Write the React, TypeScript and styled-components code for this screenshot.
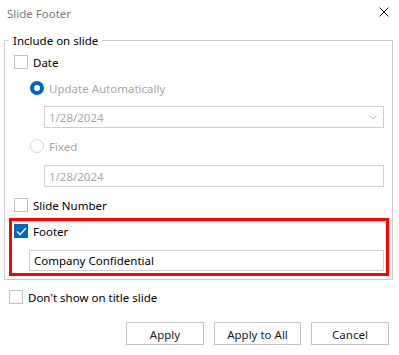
import React from "react";
import styled, { createGlobalStyle } from "styled-components";

const Global = createGlobalStyle`
  html, body { margin: 0; padding: 0; background: #fff; }
  body { font-family: "Segoe UI", "Noto Sans", "Open Sans", sans-serif; font-size: 11.5px; color: #000; }
  * { box-sizing: border-box; }
`;

const Dialog = styled.div`
  width: 399px;
  height: 355px;
  background: #fff;
  display: flex;
  flex-direction: column;
  overflow: hidden;
`;

const TitleBar = styled.div`
  height: 32px;
  flex: none;
  display: flex;
  align-items: flex-start;
  justify-content: space-between;
  padding: 5px 10px 0 7px;
`;

const Title = styled.span`
  color: #7a7a7a;
  font-size: 11.5px;
  line-height: 17px;
`;

const CloseBtn = styled.span`
  display: flex;
  width: 10px;
  height: 10px;
  margin-top: 2px;
`;

const Group = styled.fieldset`
  margin: 0 0 0 4px;
  width: 389px;
  flex: none;
  border: 1px solid #cccccc;
  padding: 0 3px 3px 4px;
  display: flex;
  flex-direction: column;
  min-width: 0;
`;

const Legend = styled.legend`
  padding: 0 4px;
  height: 16px;
  line-height: 17px;
  font-size: 11.5px;
  color: #000;
`;

const Row = styled.div<{ $h: number; $indent: number; $mt?: number }>`
  display: flex;
  flex: none;
  align-items: center;
  gap: 5px;
  height: ${(p) => p.$h}px;
  padding-left: ${(p) => p.$indent}px;
  margin-top: ${(p) => p.$mt ?? 0}px;
`;

const Label = styled.span<{ $disabled?: boolean }>`
  color: ${(p) => (p.$disabled ? "#a8a8a8" : "#000")};
  line-height: 16px;
  padding-top: 1px;
  white-space: nowrap;
`;

const Box = styled.span<{ $checked?: boolean }>`
  width: 14px;
  height: 14px;
  flex: none;
  border: 1px solid ${(p) => (p.$checked ? "#0067c0" : "#c2c2c2")};
  background: ${(p) => (p.$checked ? "#0067c0" : "#fff")};
  display: flex;
  align-items: center;
  justify-content: center;
`;

const Radio = styled.span<{ $checked?: boolean }>`
  width: 14px;
  height: 14px;
  flex: none;
  border-radius: 50%;
  ${(p) =>
    p.$checked
      ? "background: #fff; border: 4px solid #0067c0;"
      : "background: #fff; border: 1px solid #d6d6d6;"}
`;

const Field = styled.div<{ $ml: number; $mr: number; $mt: number; $h: number; $disabled?: boolean }>`
  height: ${(p) => p.$h}px;
  flex: none;
  margin: ${(p) => p.$mt}px ${(p) => p.$mr}px 0 ${(p) => p.$ml}px;
  border: 1px solid #cfcfcf;
  display: flex;
  align-items: center;
  justify-content: space-between;
  padding: 1px 6px 0 4px;
  color: ${(p) => (p.$disabled ? "#a8a8a8" : "#000")};
  line-height: 16px;
`;

const Highlight = styled.div`
  margin-top: 1px;
  height: 58px;
  flex: none;
  border: 3px solid #ff0000;
  padding: 0 2px 2px 2px;
  display: flex;
  flex-direction: column;
`;

const Footer = styled.div`
  display: flex;
  flex: none;
  justify-content: flex-end;
  gap: 10px;
  padding-right: 10px;
  margin-top: 13px;
`;

const Button = styled.button<{ $w: number }>`
  width: ${(p) => p.$w}px;
  height: 23px;
  border: 1px solid #c4c4c4;
  background: #fff;
  font-family: inherit;
  font-size: 11.5px;
  color: #1a1a1a;
  padding: 1px 0 0;
`;

const Check = () => (
  <svg width="11" height="9" viewBox="0 0 11 9">
    <path d="M1 4.6 L4 7.5 L10 1.2" fill="none" stroke="#fff" strokeWidth="1.4" />
  </svg>
);

const Chevron = () => (
  <svg width="8" height="5" viewBox="0 0 8 5">
    <path d="M0.5 0.5 L4 4 L7.5 0.5" fill="none" stroke="#bdbdbd" strokeWidth="1" />
  </svg>
);

export default function App() {
  return (
    <>
      <Global />
      <Dialog>
        <TitleBar>
          <Title>Slide Footer</Title>
          <CloseBtn>
            <svg width="10" height="10" viewBox="0 0 10 10">
              <path d="M0.5 0.5 L9.5 9.5 M9.5 0.5 L0.5 9.5" stroke="#1a1a1a" strokeWidth="1" />
            </svg>
          </CloseBtn>
        </TitleBar>
        <Group>
          <Legend>Include on slide</Legend>
          <Row $h={28} $indent={5}>
            <Box />
            <Label>Date</Label>
          </Row>
          <Row $h={24} $indent={21}>
            <Radio $checked />
            <Label $disabled>Update Automatically</Label>
          </Row>
          <Field $ml={35} $mr={5} $mt={6} $h={22} $disabled>
            <span>1/28/2024</span>
            <Chevron />
          </Field>
          <Row $h={24} $indent={21} $mt={6}>
            <Radio />
            <Label $disabled>Fixed</Label>
          </Row>
          <Field $ml={35} $mr={5} $mt={7} $h={22} $disabled>
            <span>1/28/2024</span>
          </Field>
          <Row $h={24} $indent={5} $mt={6}>
            <Box />
            <Label>Slide Number</Label>
          </Row>
          <Highlight>
            <Row $h={20} $indent={0}>
              <Box $checked>
                <Check />
              </Box>
              <Label>Footer</Label>
            </Row>
            <Field $ml={15} $mr={0} $mt={9} $h={21}>
              <span>Company Confidential</span>
            </Field>
          </Highlight>
        </Group>
        <Row $h={24} $indent={9} $mt={5}>
          <Box />
          <Label>Don't show on title slide</Label>
        </Row>
        <Footer>
          <Button $w={78}>Apply</Button>
          <Button $w={87}>Apply to All</Button>
          <Button $w={78}>Cancel</Button>
        </Footer>
      </Dialog>
    </>
  );
}
